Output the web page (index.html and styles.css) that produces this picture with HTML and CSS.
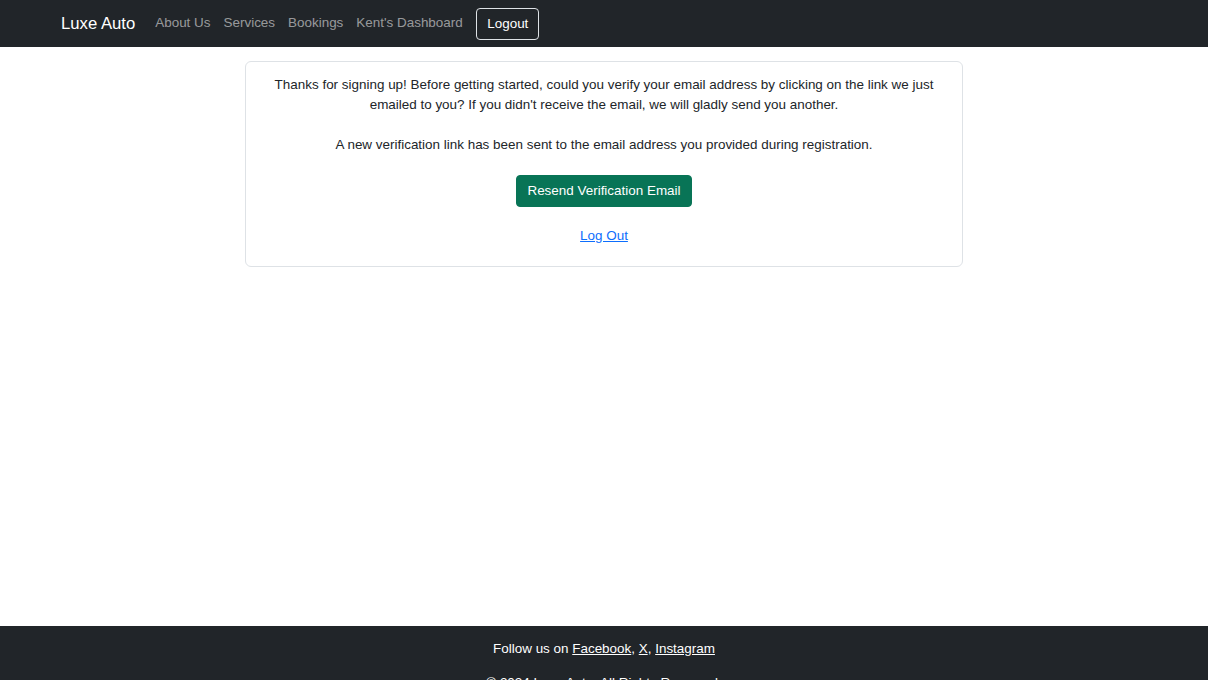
FILE: index.html
```html
<!DOCTYPE html>
<html lang="en">
<head>
<meta charset="utf-8">
<title>Luxe Auto</title>
<link rel="stylesheet" href="styles.css">
</head>
<body>
<div class="page">
  <nav class="navbar">
    <div class="nav-inner">
      <a class="brand" href="#">Luxe Auto</a>
      <ul class="nav-links">
        <li><a href="#">About Us</a></li>
        <li><a href="#">Services</a></li>
        <li><a href="#">Bookings</a></li>
        <li><a href="#">Kent's Dashboard</a></li>
      </ul>
      <button class="btn-logout" type="button">Logout</button>
    </div>
  </nav>
  <main class="main">
    <div class="card">
      <p class="msg">Thanks for signing up! Before getting started, could you verify your email address by clicking on the link we just emailed to you? If you didn't receive the email, we will gladly send you another.</p>
      <p class="msg">A new verification link has been sent to the email address you provided during registration.</p>
      <button class="btn-resend" type="button">Resend Verification Email</button>
      <a class="logout-link" href="#">Log Out</a>
    </div>
  </main>
  <footer class="footer">
    <p class="follow">Follow us on <a href="#">Facebook</a>, <a href="#">X</a>, <a href="#">Instagram</a></p>
    <p class="copy">© 2024 Luxe Auto. All Rights Reserved.</p>
  </footer>
</div>
</body>
</html>
```

FILE: styles.css
```css
* { box-sizing: border-box; }
html, body { margin: 0; padding: 0; }
body {
  font-family: "Liberation Sans", Arial, sans-serif;
  font-size: 13.45px;
  line-height: 1.5;
  color: #212529;
  background: #fff;
  overflow: hidden;
}
.page {
  display: flex;
  flex-direction: column;
  min-height: 680px;
}
.navbar {
  background: #212529;
  height: 47px;
  display: flex;
  align-items: center;
}
.nav-inner {
  display: flex;
  align-items: center;
  padding-left: 61px;
}
.brand {
  color: #fff;
  text-decoration: none;
  font-size: 16.7px;
  margin-right: 13.5px;
}
.nav-links {
  list-style: none;
  margin: 0;
  padding: 0;
  display: flex;
}
.nav-links a {
  display: block;
  color: rgba(255,255,255,0.55);
  text-decoration: none;
  padding: 0 6.5px;
}
.btn-logout {
  margin-left: 7px;
  background: transparent;
  color: #fff;
  border: 1px solid #dee2e6;
  border-radius: 4px;
  font-family: inherit;
  font-size: 13.45px;
  line-height: 20px;
  padding: 0 10px;
  height: 32px;
  width: 63px;
}
.main {
  flex: 1;
  display: flex;
  justify-content: center;
  padding-top: 14px;
}
.card {
  width: 718px;
  height: 206px;
  border: 1px solid #dee2e6;
  border-radius: 6px;
  padding: 13px 16px 0;
  display: flex;
  flex-direction: column;
  align-items: center;
  text-align: center;
}
.msg {
  margin: 0 0 20px;
  line-height: 20px;
}
.btn-resend {
  background: #087456;
  color: #fff;
  border: 1px solid #087456;
  border-radius: 4px;
  font-family: inherit;
  font-size: 13.45px;
  line-height: 20px;
  height: 32px;
  padding: 0 10px;
}
.logout-link {
  margin-top: 19px;
  color: #0d6efd;
  text-decoration: underline;
}
.footer {
  background: #212529;
  color: #fff;
  text-align: center;
  height: 54px;
  padding-top: 13px;
}
.footer p { margin: 0 0 14px; }
.footer a { color: #fff; text-decoration: underline; }
```
